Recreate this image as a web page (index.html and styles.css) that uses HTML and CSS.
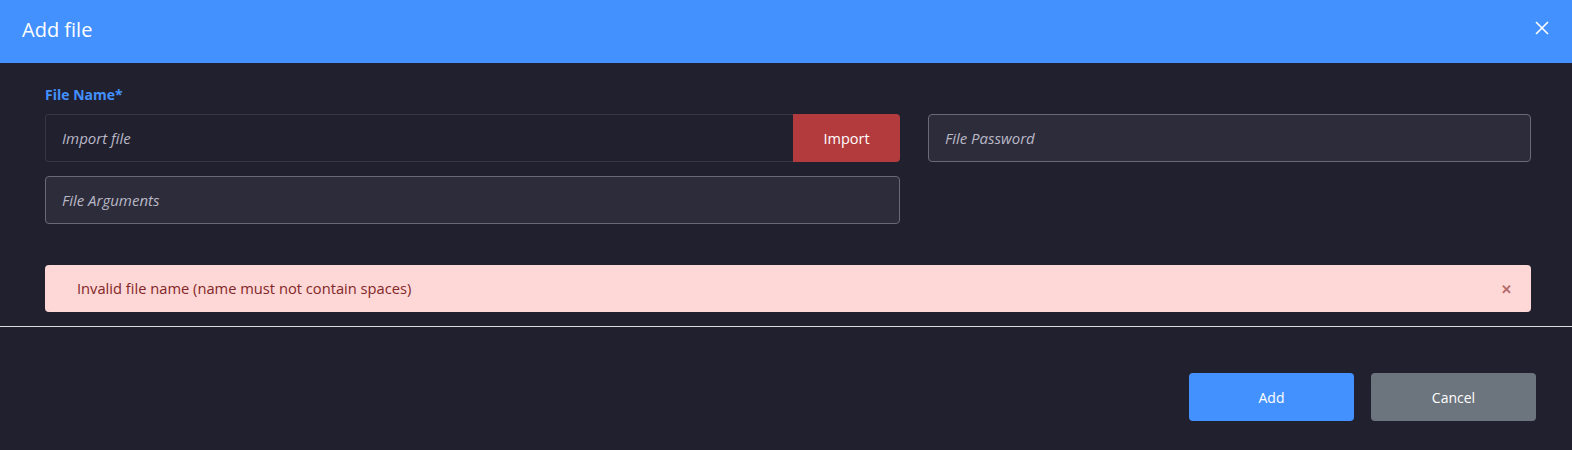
FILE: index.html
```html
<!DOCTYPE html>
<html>
<head>
<meta charset="utf-8">
<link rel="stylesheet" href="styles.css">
</head>
<body>
<div class="modal">
  <div class="modal-header">
    <h1 class="title">Add file</h1>
    <button class="close-btn" aria-label="Close">
      <svg width="14" height="14" viewBox="0 0 14 14"><path d="M1 1L13 13M13 1L1 13" stroke="#fff" stroke-width="1.6" fill="none"/></svg>
    </button>
  </div>
  <div class="modal-body">
    <div class="form-grid">
      <div class="col-left">
        <label class="field-label">File Name*</label>
        <div class="input-group">
          <input class="input input-import" placeholder="Import file">
          <button class="btn-import">Import</button>
        </div>
      </div>
      <div class="col-right">
        <input class="input input-plain" placeholder="File Password">
      </div>
      <div class="col-left">
        <input class="input input-plain" placeholder="File Arguments">
      </div>
    </div>
    <div class="alert">
      <span class="alert-text">Invalid file name (name must not contain spaces)</span>
      <span class="alert-close">&#x2715;</span>
    </div>
  </div>
  <div class="modal-footer">
    <button class="btn btn-add">Add</button>
    <button class="btn btn-cancel">Cancel</button>
  </div>
</div>
</body>
</html>
```
FILE: styles.css
```css
* { box-sizing: border-box; }
html, body {
  margin: 0;
  padding: 0;
  background: #21202e;
  font-family: "Open Sans", "Noto Sans", sans-serif;
}
.modal {
  width: 1572px;
  height: 450px;
  background: #21202e;
}
.modal-header {
  height: 63px;
  background: #4391ff;
  display: flex;
  align-items: center;
  justify-content: space-between;
  padding: 0 23px 0 22px;
}
.title {
  margin: 0;
  font-size: 20px;
  font-weight: 400;
  color: #fff;
  line-height: 1;
  position: relative;
  top: -2px;
}
.close-btn {
  background: none;
  border: 0;
  padding: 0;
  width: 14px;
  height: 14px;
  display: flex;
  position: relative;
  top: -4px;
}
.modal-body {
  padding: 22px 41px 14px 45px;
  border-bottom: 1px solid #dcdcdc;
}
.form-grid {
  display: grid;
  grid-template-columns: 855px 603px;
  column-gap: 28px;
  row-gap: 14px;
  align-items: end;
}
.field-label {
  display: block;
  color: #4391ff;
  font-size: 14px;
  font-weight: 700;
  line-height: 20px;
  margin-bottom: 9px;
}
.input-group {
  display: flex;
  height: 48px;
}
.input {
  height: 48px;
  font-family: "Open Sans", "Noto Sans", sans-serif;
  font-size: 15px;
  font-style: italic;
  padding: 0 16px;
  color: #fff;
  outline: none;
  border-radius: 4px;
}
.input::placeholder {
  color: #b9b8c6;
  font-style: italic;
}
.input-import {
  flex: 1;
  background: #21202e;
  border: 1px solid #373645;
  border-right: 0;
  border-radius: 4px 0 0 4px;
}
.btn-import {
  width: 107px;
  height: 48px;
  border: 0;
  background: #b33b3d;
  color: #fff;
  font-family: "Open Sans", "Noto Sans", sans-serif;
  font-size: 14.5px;
  border-radius: 0 4px 4px 0;
}
.input-plain {
  width: 100%;
  background: #2d2c3a;
  border: 1px solid #6a6977;
}
.alert {
  margin-top: 41px;
  height: 47px;
  background: #fed7d7;
  border-radius: 4px;
  display: flex;
  align-items: center;
  justify-content: space-between;
  padding: 0 19px 0 32px;
}
.alert-text {
  color: #822727;
  font-size: 14.7px;
  position: relative;
  top: -1px;
}
.alert-close {
  color: #b46a6a;
  font-size: 13px;
  font-weight: 700;
}
.modal-footer {
  display: flex;
  justify-content: flex-end;
  gap: 17px;
  padding: 46px 36px 0 0;
}
.btn {
  width: 165px;
  height: 48px;
  border: 0;
  border-radius: 4px;
  color: #fff;
  font-family: "Open Sans", "Noto Sans", sans-serif;
  font-size: 14px;
}
.btn-add { background: #4391ff; }
.btn-cancel { background: #6c757d; }
```
